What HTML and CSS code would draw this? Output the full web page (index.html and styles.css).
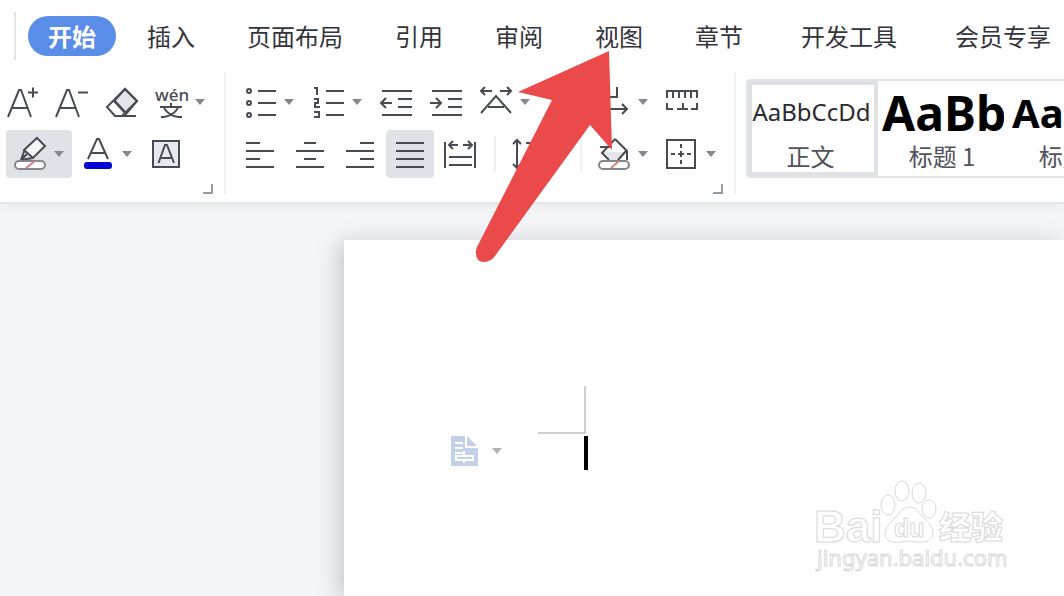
FILE: index.html
```html
<!DOCTYPE html>
<html lang="zh-CN">
<head>
<meta charset="utf-8">
<title>文档</title>
<link rel="stylesheet" href="styles.css">
</head>
<body>
<header class="ribbon">
  <nav class="tabs">
    <button class="tab active">开始</button>
    <button class="tab">插入</button>
    <button class="tab">页面布局</button>
    <button class="tab">引用</button>
    <button class="tab">审阅</button>
    <button class="tab">视图</button>
    <button class="tab">章节</button>
    <button class="tab spaced">开发工具</button>
    <button class="tab spaced">会员专享</button>
  </nav>
  <div class="toolbar">
    <section class="group">
      <div class="row tight">
        <button class="tool" aria-label="增大字号"><svg class="icon" viewBox="0 0 32 32"><path d="M0 31L11 4h2L23 31M4 22h16M20 6.500h10M25 1.500v10"/></svg></button>
        <button class="tool" aria-label="减小字号"><svg class="icon" viewBox="0 0 32 32"><path d="M-1 31L10 4h2L22 31M3 22h16M21 6.500h10"/></svg></button>
        <button class="tool" aria-label="清除格式"><svg class="icon" viewBox="0 0 32 32"><path fill="#e3e7ec" d="M19 3L31 15 20 28 8 15z"/><path d="M19 3L31 15 16 30H9L1 21zM8 14L20 27M10 30h20"/></svg></button>
        <button class="tool split" aria-label="拼音指南"><svg class="icon" viewBox="0 0 32 32"><text class="pinyin" x="0" y="15">wén</text><path d="M16 17v4M5 21h22M9 22c3 5 8 8 14 9M23 22c-3 5-8 8-14 9M6 31h5M21 31h6"/></svg><svg class="caret" viewBox="0 0 10 6"><path d="M0 0h10L5 6z"/></svg></button>
      </div>
      <div class="row inset">
        <button class="tool split selected" aria-label="突出显示"><svg class="icon" viewBox="0 0 32 32"><path fill="#f4f6f8" d="M23 0l8 8-12 12-9-8z"/><path d="M11 11l-4 11 12-2M7 22l6-6"/><rect class="swatch" x="1" y="23" width="30" height="8" rx="4"/><path class="none" d="M12 30l9-7"/></svg><svg class="caret" viewBox="0 0 10 6"><path d="M0 0h10L5 6z"/></svg></button>
        <button class="tool split" aria-label="字体颜色"><svg class="icon" viewBox="0 0 32 32"><path d="M6 21L15 1h2L26 21M9 15h14"/><rect class="blue" x="2" y="24" width="28" height="7" rx="3"/></svg><svg class="caret" viewBox="0 0 10 6"><path d="M0 0h10L5 6z"/></svg></button>
        <button class="tool" aria-label="字符底纹"><svg class="icon" viewBox="0 0 32 32"><rect x="3" y="3" width="26" height="26" fill="#e6e9ed"/><path d="M8.500 25L15 7h2l7 18M11 20h10"/></svg></button>
      </div>
      <button class="launcher" aria-label="字体设置"></button>
    </section>

    <section class="group paragraph">
      <div class="row">
        <button class="tool split" aria-label="项目符号"><svg class="icon" viewBox="0 0 32 32"><circle cx="5" cy="5" r="2"/><circle cx="5" cy="17" r="2"/><circle cx="5" cy="29" r="2"/><path d="M14 5h18M14 17h18M14 29h18"/></svg><svg class="caret" viewBox="0 0 10 6"><path d="M0 0h10L5 6z"/></svg></button>
        <button class="tool split" aria-label="编号"><svg class="icon" viewBox="0 0 32 32"><path d="M2 2h3v7M2 13h4v4H3v4h5M2 26h5v5H2M14 5h18M14 17h18M14 29h18"/></svg><svg class="caret" viewBox="0 0 10 6"><path d="M0 0h10L5 6z"/></svg></button>
        <button class="tool" aria-label="减少缩进"><svg class="icon" viewBox="0 0 32 32"><path d="M2 5h30M18 13h14M18 21h14M2 29h30M1 17h11M6 12l-5 5 5 5"/></svg></button>
        <button class="tool" aria-label="增加缩进"><svg class="icon" viewBox="0 0 32 32"><path d="M2 5h30M18 13h14M18 21h14M2 29h30M0 17h11M6 12l5 5-5 5"/></svg></button>
        <button class="tool split" aria-label="中文版式"><svg class="icon" viewBox="0 0 32 32"><path d="M1 5h11M5 1L1 5l4 4M20 5h11M27 1l4 4-4 4M1 27l15-17 15 17M8 21h16"/></svg><svg class="caret" viewBox="0 0 10 6"><path d="M0 0h10L5 6z"/></svg></button>
        <button class="tool" aria-label="排序"><svg class="icon" viewBox="0 0 32 32"><path d="M10 6v16"/></svg></button>
        <button class="tool split" aria-label="显示段落标记"><svg class="icon" viewBox="0 0 32 32"><path d="M19 1v10h-9M10 23h19M24 18l5 5-5 5"/></svg><svg class="caret" viewBox="0 0 10 6"><path d="M0 0h10L5 6z"/></svg></button>
        <button class="tool" aria-label="制表位"><svg class="icon" viewBox="0 0 32 32"><path d="M1 12V5h30v7M7 5v7M13 5v7M19 5v7M25 5v7M1 17v6h6M31 17v6h-6M17 17v6M11 23h11"/></svg></button>
      </div>
      <div class="row">
        <button class="tool" aria-label="左对齐"><svg class="icon" viewBox="0 0 32 32"><path d="M2 5h14M2 13h28M2 21h14M2 29h28"/></svg></button>
        <button class="tool" aria-label="居中"><svg class="icon" viewBox="0 0 32 32"><path d="M10 5h12M2 13h28M10 21h12M2 29h28"/></svg></button>
        <button class="tool" aria-label="右对齐"><svg class="icon" viewBox="0 0 32 32"><path d="M16 5h14M2 13h28M16 21h14M2 29h28"/></svg></button>
        <button class="tool selected" aria-label="两端对齐"><svg class="icon" viewBox="0 0 32 32"><path d="M2 5h28M2 13h28M2 21h28M2 29h28"/></svg></button>
        <button class="tool" aria-label="分散对齐"><svg class="icon" viewBox="0 0 32 32"><path d="M1 4v26M31 4v26M5 19h23M5 27h23M5 7h9M9 3L5 7l4 4M19 7h9M24 3l4 4-4 4"/></svg></button>
        <span class="divider first"></span>
        <button class="tool split" aria-label="行距"><svg class="icon" viewBox="0 0 32 32"><path d="M7 2v28M3 6l4-4 4 4M3 26l4 4 4-4M16 5h14M16 16h14M16 27h14"/></svg><svg class="caret" viewBox="0 0 10 6"><path d="M0 0h10L5 6z"/></svg></button>
        <span class="divider second"></span>
        <button class="tool split" aria-label="底纹颜色"><svg class="icon" viewBox="0 0 32 32"><path fill="#e3e7ec" stroke="none" d="M4 14h24l-8 9h-9z"/><path d="M2 9h12M17 1L4 15l7 7M17 1l12 12v9M28 13l-8 9"/><rect class="swatch" x="1" y="23" width="30" height="8" rx="4"/><path class="none" d="M13 30l8-7"/></svg><svg class="caret" viewBox="0 0 10 6"><path d="M0 0h10L5 6z"/></svg></button>
        <button class="tool split" aria-label="边框"><svg class="icon" viewBox="0 0 32 32"><path d="M1 2h28v28H1zM15 6v4M15 13v6M15 22v4M5 16h4M12 16h6M21 16h4"/></svg><svg class="caret" viewBox="0 0 10 6"><path d="M0 0h10L5 6z"/></svg></button>
      </div>
      <button class="launcher" aria-label="段落设置"></button>
    </section>

    <section class="gallery">
      <button class="style current"><span class="sample">AaBbCcDd</span><span class="name">正文</span></button>
      <button class="style"><span class="sample h1">AaBb</span><span class="name">标题 1</span></button>
      <button class="style"><span class="sample h2">AaBb</span><span class="name">标题 2</span></button>
    </section>
  </div>
</header>

<main class="workspace">
  <article class="page">
    <div class="corner"></div>
    <div class="line">
      <button class="paste" aria-label="段落布局"><svg class="doc" viewBox="0 0 27 30"><path fill="#c4d0e7" d="M0 0h16l11 11v19H0z"/><path fill="none" stroke="#fff" stroke-width="2" d="M15 0v11h12M4 7h8M4 12h8M4 17h9M13 15v4M5 24v-4h17v4zM13 24v3"/></svg><svg class="caret" viewBox="0 0 10 6"><path d="M0 0h10L5 6z"/></svg></button>
      <span class="cursor"></span>
    </div>
  </article>
</main>

<svg class="arrow" viewBox="0 0 138 212" aria-hidden="true"><path fill="#eb4a4a" d="M134 0L43 41l34 8L2 196c-3 7 0 15 6 15 5 0 9-2 12-6l95-131 22 25z"/></svg>

<svg class="watermark" viewBox="0 0 200 100" aria-hidden="true">
  <g class="outline">
    <text class="brand" x="2" y="62">Bai</text>
    <ellipse cx="76" cy="25" rx="7" ry="10"/>
    <ellipse cx="90" cy="11" rx="7" ry="10"/>
    <ellipse cx="107" cy="13" rx="7" ry="10"/>
    <ellipse cx="117" cy="29" rx="7" ry="9"/>
    <path d="M97 27c-8 0-10 8-16 13-10 8-11 20 0 22 6 1 10-1 16-1s10 2 16 1c11-3 10-15 0-23-6-5-8-12-16-12z"/>
    <text class="du" x="82" y="57">du</text>
    <text class="cn" x="127" y="59">经验</text>
    <text class="url" x="5" y="86">jingyan.baidu.com</text>
  </g>
</svg>
</body>
</html>
```

FILE: styles.css
```css
* { box-sizing: border-box; }

body {
  margin: 0;
  min-height: 100vh;
  display: flex;
  flex-direction: column;
  position: relative;
  overflow: hidden;
  background: #f4f5f8;
  color: #33343c;
  font-family: "Noto Sans", "Noto Sans CJK SC", sans-serif;
}

button {
  margin: 0;
  padding: 0;
  border: 0;
  background: none;
  color: inherit;
  font: inherit;
}

.ribbon {
  position: relative;
  padding-bottom: 8px;
  background: #fefefe;
  border-bottom: 2px solid #e4e6e8;
  box-shadow: 0 2px 10px #e6e9ea;
}

.tabs {
  display: flex;
  align-items: center;
  height: 48px;
  margin: 12px 0 12px 14px;
  padding-left: 12px;
  border-left: 2px solid #e6e6e8;
}

.tab {
  flex: none;
  padding: 0 26px;
  font: 24px/40px "Noto Sans CJK SC", sans-serif;
}

.tab.active {
  margin-right: 5px;
  padding: 0 20px;
  border-radius: 20px;
  background: #5a8de8;
  color: #fff;
  font-weight: 700;
}

.tab.spaced { padding-left: 32px; }

.toolbar {
  display: flex;
  height: 122px;
}

.group {
  flex: none;
  display: flex;
  flex-direction: column;
  gap: 4px;
  width: 226px;
  padding-top: 6px;
  border-right: 2px solid #f0f1f3;
}

.group.paragraph {
  width: 510px;
  padding-left: 10px;
}

.row {
  display: flex;
  align-items: center;
  gap: 2px;
}

.row.tight { gap: 1px; }
.row.inset { padding-left: 6px; }

.tool {
  flex: none;
  display: flex;
  align-items: center;
  gap: 8px;
  height: 48px;
  padding: 0 8px;
  border-radius: 4px;
}

.tool.selected { background: #dfe3e7; }

.icon {
  width: 32px;
  height: 32px;
  overflow: visible;
  fill: none;
  stroke: #484b52;
  stroke-width: 2;
}

.icon .swatch { fill: #fff; stroke: #85868b; }
.icon .none { stroke: #d77f83; }
.icon .blue { fill: #0505d2; stroke: none; }

.pinyin {
  fill: #484b52;
  stroke: none;
  font: 500 17px "Noto Sans", sans-serif;
}

.caret {
  width: 10px;
  height: 6px;
  fill: #85868e;
}

.launcher {
  align-self: flex-end;
  width: 10px;
  height: 10px;
  margin: 2px 11px 0 0;
  border-right: 2px solid #97999e;
  border-bottom: 2px solid #97999e;
}

.divider {
  width: 2px;
  height: 36px;
  background: #eff0f2;
}

.divider.first { margin: 0 4px 0 8px; }
.divider.second { margin: 0 6px 0 10px; }

.gallery {
  flex: 1;
  display: flex;
  height: 99px;
  min-width: 0;
  margin: 7px 0 0 10px;
  overflow: hidden;
  border: 2px solid #e2e4e7;
  border-right: 0;
  border-radius: 4px 0 0 4px;
}

.style {
  flex: none;
  display: flex;
  flex-direction: column;
  align-items: center;
  width: 130px;
  padding: 0 4px;
}

.style.current {
  padding: 0 3px 0 0;
  box-shadow: inset 0 0 0 4px #dfe1e4;
}

.sample {
  width: 100%;
  height: 59px;
  overflow: hidden;
  color: #2b2b2f;
  font-size: 24px;
  line-height: 62px;
  text-align: center;
}

.sample.h1,
.sample.h2 {
  color: #000;
  font-size: 48px;
  font-weight: 700;
  line-height: 64px;
  text-align: left;
}

.sample.h2 { font-size: 40px; }

.name {
  padding-right: 2px;
  color: #50525c;
  font: 24px/32px "Noto Sans CJK SC", sans-serif;
}

.workspace {
  flex: 1;
  display: flex;
  padding: 36px 0 0 344px;
}

.page {
  flex: 1;
  padding-top: 146px;
  background: #fefefe;
  box-shadow: -6px 2px 20px #c8cacd;
}

.corner {
  width: 48px;
  height: 48px;
  margin-left: 194px;
  border-right: 2px solid #cfcfcf;
  border-bottom: 2px solid #cfcfcf;
}

.line {
  display: flex;
  gap: 82px;
  align-items: flex-start;
  margin: 2px 0 0 107px;
}

.paste {
  display: flex;
  align-items: center;
  gap: 14px;
}

.paste .caret { fill: #b3b3b3; }

.doc {
  width: 27px;
  height: 30px;
}

.cursor {
  width: 4px;
  height: 34px;
  background: #000;
}

.arrow {
  position: absolute;
  left: 475px;
  top: 51px;
  width: 138px;
  height: 212px;
}

.watermark {
  position: absolute;
  right: 52px;
  bottom: 16px;
  width: 200px;
  height: 100px;
}

.outline {
  fill: #fff;
  stroke: #d9d9d9;
  stroke-width: 1;
}

.brand { font: 700 44px "Liberation Sans", sans-serif; }
.du { font: 700 25px "Liberation Sans", sans-serif; }
.cn { font: 900 32px "Noto Sans CJK SC", sans-serif; }
.url { font: 22px "Noto Sans", sans-serif; }
```
